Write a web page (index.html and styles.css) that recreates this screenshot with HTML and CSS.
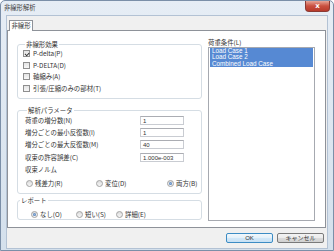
FILE: index.html
```html
<!DOCTYPE html>
<html lang="ja">
<head>
    <meta charset="UTF-8">
    <title>非線形解析</title>
    <link rel="stylesheet" href="styles.css">
</head>
<body>
    <div class="window">
        <div class="titlebar">
            <span class="title">非線形解析</span>
            <span class="close">x</span>
        </div>

        <div class="client">
            <!-- Registerkarte -->
            <div class="tabs">
                <div class="tab">非線形</div>
            </div>

            <div class="page">
                <div class="left">
                    <div class="group effects">
                        <div class="group-title">非線形効果</div>
                        <div class="check"><span class="box checked"></span>P-delta(P)</div>
                        <div class="check"><span class="box"></span>P-DELTA(D)</div>
                        <div class="check"><span class="box"></span>軸縮み(A)</div>
                        <div class="check"><span class="box"></span>引張/圧縮のみの部材(T)</div>
                    </div>

                    <div class="group params">
                        <div class="group-title">解析パラメータ</div>
                        <div class="field"><span class="field-label">荷重の増分数(N)</span><span class="input">1</span></div>
                        <div class="field"><span class="field-label">増分ごとの最小反復数(I)</span><span class="input">1</span></div>
                        <div class="field"><span class="field-label">増分ごとの最大反復数(M)</span><span class="input">40</span></div>
                        <div class="field"><span class="field-label">収束の許容誤差(C)</span><span class="input">1.000e-003</span></div>
                        <div class="sub-label">収束ノルム</div>
                        <div class="radios norm">
                            <div class="radio"><span class="dot"></span>残差力(R)</div>
                            <div class="radio"><span class="dot"></span>変位(D)</div>
                            <div class="radio"><span class="dot on"></span>両方(B)</div>
                        </div>
                    </div>

                    <div class="group report">
                        <div class="group-title">レポート</div>
                        <div class="radios rep">
                            <div class="radio"><span class="dot on"></span>なし(O)</div>
                            <div class="radio"><span class="dot"></span>短い(S)</div>
                            <div class="radio"><span class="dot"></span>詳細(E)</div>
                        </div>
                    </div>
                </div>

                <div class="right">
                    <div class="list-label">荷重条件(L)</div>
                    <div class="list">
                        <div class="item selected">Load Case 1</div>
                        <div class="item selected">Load Case 2</div>
                        <div class="item selected">Combined Load Case</div>
                    </div>
                </div>
            </div>

            <div class="buttons">
                <div class="btn default">OK</div>
                <div class="btn">キャンセル</div>
            </div>
        </div>
    </div>
</body>
</html>
```

FILE: styles.css
```css
body {
    margin: 0;
    font-family: 'Noto Sans CJK JP', 'Noto Sans', sans-serif;
    font-size: 6.4px;
    color: #333333;
    background-color: #ffffff;
}

.window {
    width: 334px;
    height: 251px;
    box-sizing: border-box;
    border: 1px solid #7b8fa8;
    border-radius: 5px 5px 0 0;
    background: linear-gradient(#e6edf5, #d4e0ec);
    display: flex;
    flex-direction: column;
}

/* Titelleiste */
.titlebar {
    height: 13px;
    display: flex;
    align-items: flex-start;
    justify-content: space-between;
}
.title {
    margin: 3px 0 0 3px;
    line-height: 8px;
    font-size: 6.3px;
    color: #3a3a3a;
}
.close {
    width: 25px;
    height: 11px;
    margin-right: 3px;
    border: 1px solid #8b3a33;
    border-top: none;
    border-radius: 0 0 4px 4px;
    background: linear-gradient(#e8a597, #c9503f 50%, #b83a2b);
    color: #fff;
    font-family: 'DejaVu Sans', sans-serif;
    font-weight: bold;
    font-size: 7px;
    line-height: 10px;
    text-align: center;
    box-sizing: border-box;
}

.client {
    margin: 1px 5px 0 5px;
    height: 232px;
    border: 1px solid #b3c2d4;
    background-color: #f0f0f0;
    display: flex;
    flex-direction: column;
}

/* Registerkarte */
.tabs {
    display: flex;
    padding: 4px 0 0 2px;
    height: 11px;
    margin-bottom: -1px;
}
.tab {
    width: 24px;
    height: 11px;
    box-sizing: border-box;
    border: 1px solid #8e9299;
    border-bottom: none;
    background-color: #ffffff;
    line-height: 10px;
    text-align: center;
    position: relative;
    z-index: 1;
}

.page {
    width: 319px;
    height: 198px;
    box-sizing: border-box;
    border: 1px solid #8e9299;
    background-color: #ffffff;
    display: flex;
    padding: 8px 0 0 9px;
    gap: 6px;
}

.left {
    width: 185px;
    padding-top: 5px;
    display: flex;
    flex-direction: column;
}

.group {
    border: 1px solid #d5dde4;
    border-radius: 3px;
    box-sizing: border-box;
}
.group-title {
    margin: -4px 0 0 2px;
    padding: 0 1px;
    width: fit-content;
    line-height: 7px;
    background-color: #ffffff;
}

.effects {
    height: 55px;
    padding-left: 5px;
}
.check {
    height: 11.5px;
    display: flex;
    align-items: center;
    gap: 3px;
}
.box {
    width: 5px;
    height: 5px;
    border: 1px solid #8f8f8f;
    background: linear-gradient(#e4e4e4, #f7f7f7);
    display: flex;
    align-items: center;
    justify-content: center;
}
.box.checked::after {
    content: "";
    width: 3px;
    height: 1.5px;
    border-left: 1px solid #333;
    border-bottom: 1px solid #333;
    transform: rotate(-45deg) translate(0.3px, -0.5px);
}

.params {
    margin-top: 11px;
    height: 84px;
    padding-left: 7px;
}
.field {
    height: 12.4px;
    display: flex;
    align-items: center;
}
.field:first-of-type {
    margin-top: 2px;
}
.field-label {
    width: 115px;
}
.input {
    width: 44px;
    height: 9px;
    box-sizing: border-box;
    border: 1px solid #c9ccd2;
    border-top-color: #abadb3;
    padding-left: 2px;
    line-height: 8px;
    font-family: 'Liberation Sans', sans-serif;
    font-size: 6px;
}
.sub-label {
    margin-top: 2px;
    line-height: 7px;
}

.radios {
    display: flex;
    align-items: center;
    height: 10px;
}
.norm {
    margin-top: 6px;
}
.norm .radio:nth-child(1) { width: 70px; margin-left: 1px; }
.norm .radio:nth-child(2) { width: 71px; }
.rep {
    margin-top: 5px;
}
.rep .radio:nth-child(1) { width: 45px; margin-left: 13px; }
.rep .radio:nth-child(2) { width: 40px; }

.radio {
    display: flex;
    align-items: center;
    gap: 2px;
}
.dot {
    width: 5px;
    height: 5px;
    border: 1px solid #a3a3a3;
    border-radius: 50%;
    background: linear-gradient(#dcdcdc, #f6f6f6);
    display: flex;
    align-items: center;
    justify-content: center;
}
.dot.on::after {
    content: "";
    width: 3px;
    height: 3px;
    border-radius: 50%;
    background: radial-gradient(#8fb4e0, #3b6aa6);
}

.report {
    margin-top: 6px;
    height: 20px;
}

/* Liste der Lastfälle */
.right {
    width: 107px;
    display: flex;
    flex-direction: column;
}
.list-label {
    line-height: 8px;
}
.list {
    height: 174px;
    box-sizing: border-box;
    border: 1px solid #a6a9b0;
    padding: 0 1px;
    font-family: 'Liberation Sans', sans-serif;
    font-size: 6.3px;
}
.item {
    line-height: 6.4px;
    padding-left: 2px;
}
.item.selected {
    background-color: #5689d3;
    color: #ffffff;
}

/* Schaltflächen */
.buttons {
    display: flex;
    justify-content: flex-end;
    gap: 4px;
    padding: 5px 3px 0 0;
}
.btn {
    width: 47px;
    height: 10px;
    box-sizing: border-box;
    border: 1px solid #7a7a7a;
    border-radius: 2px;
    background: linear-gradient(#f3f3f3, #ebebeb 50%, #dcdcdc 51%, #d0d0d0);
    line-height: 8px;
    text-align: center;
    font-size: 6px;
}
.btn.default {
    border-color: #3c8cc4;
    background: linear-gradient(#f2f8fc, #e3f0fa 50%, #d2e8f8 51%, #c6e0f4);
    font-family: 'Liberation Sans', sans-serif;
}
```
